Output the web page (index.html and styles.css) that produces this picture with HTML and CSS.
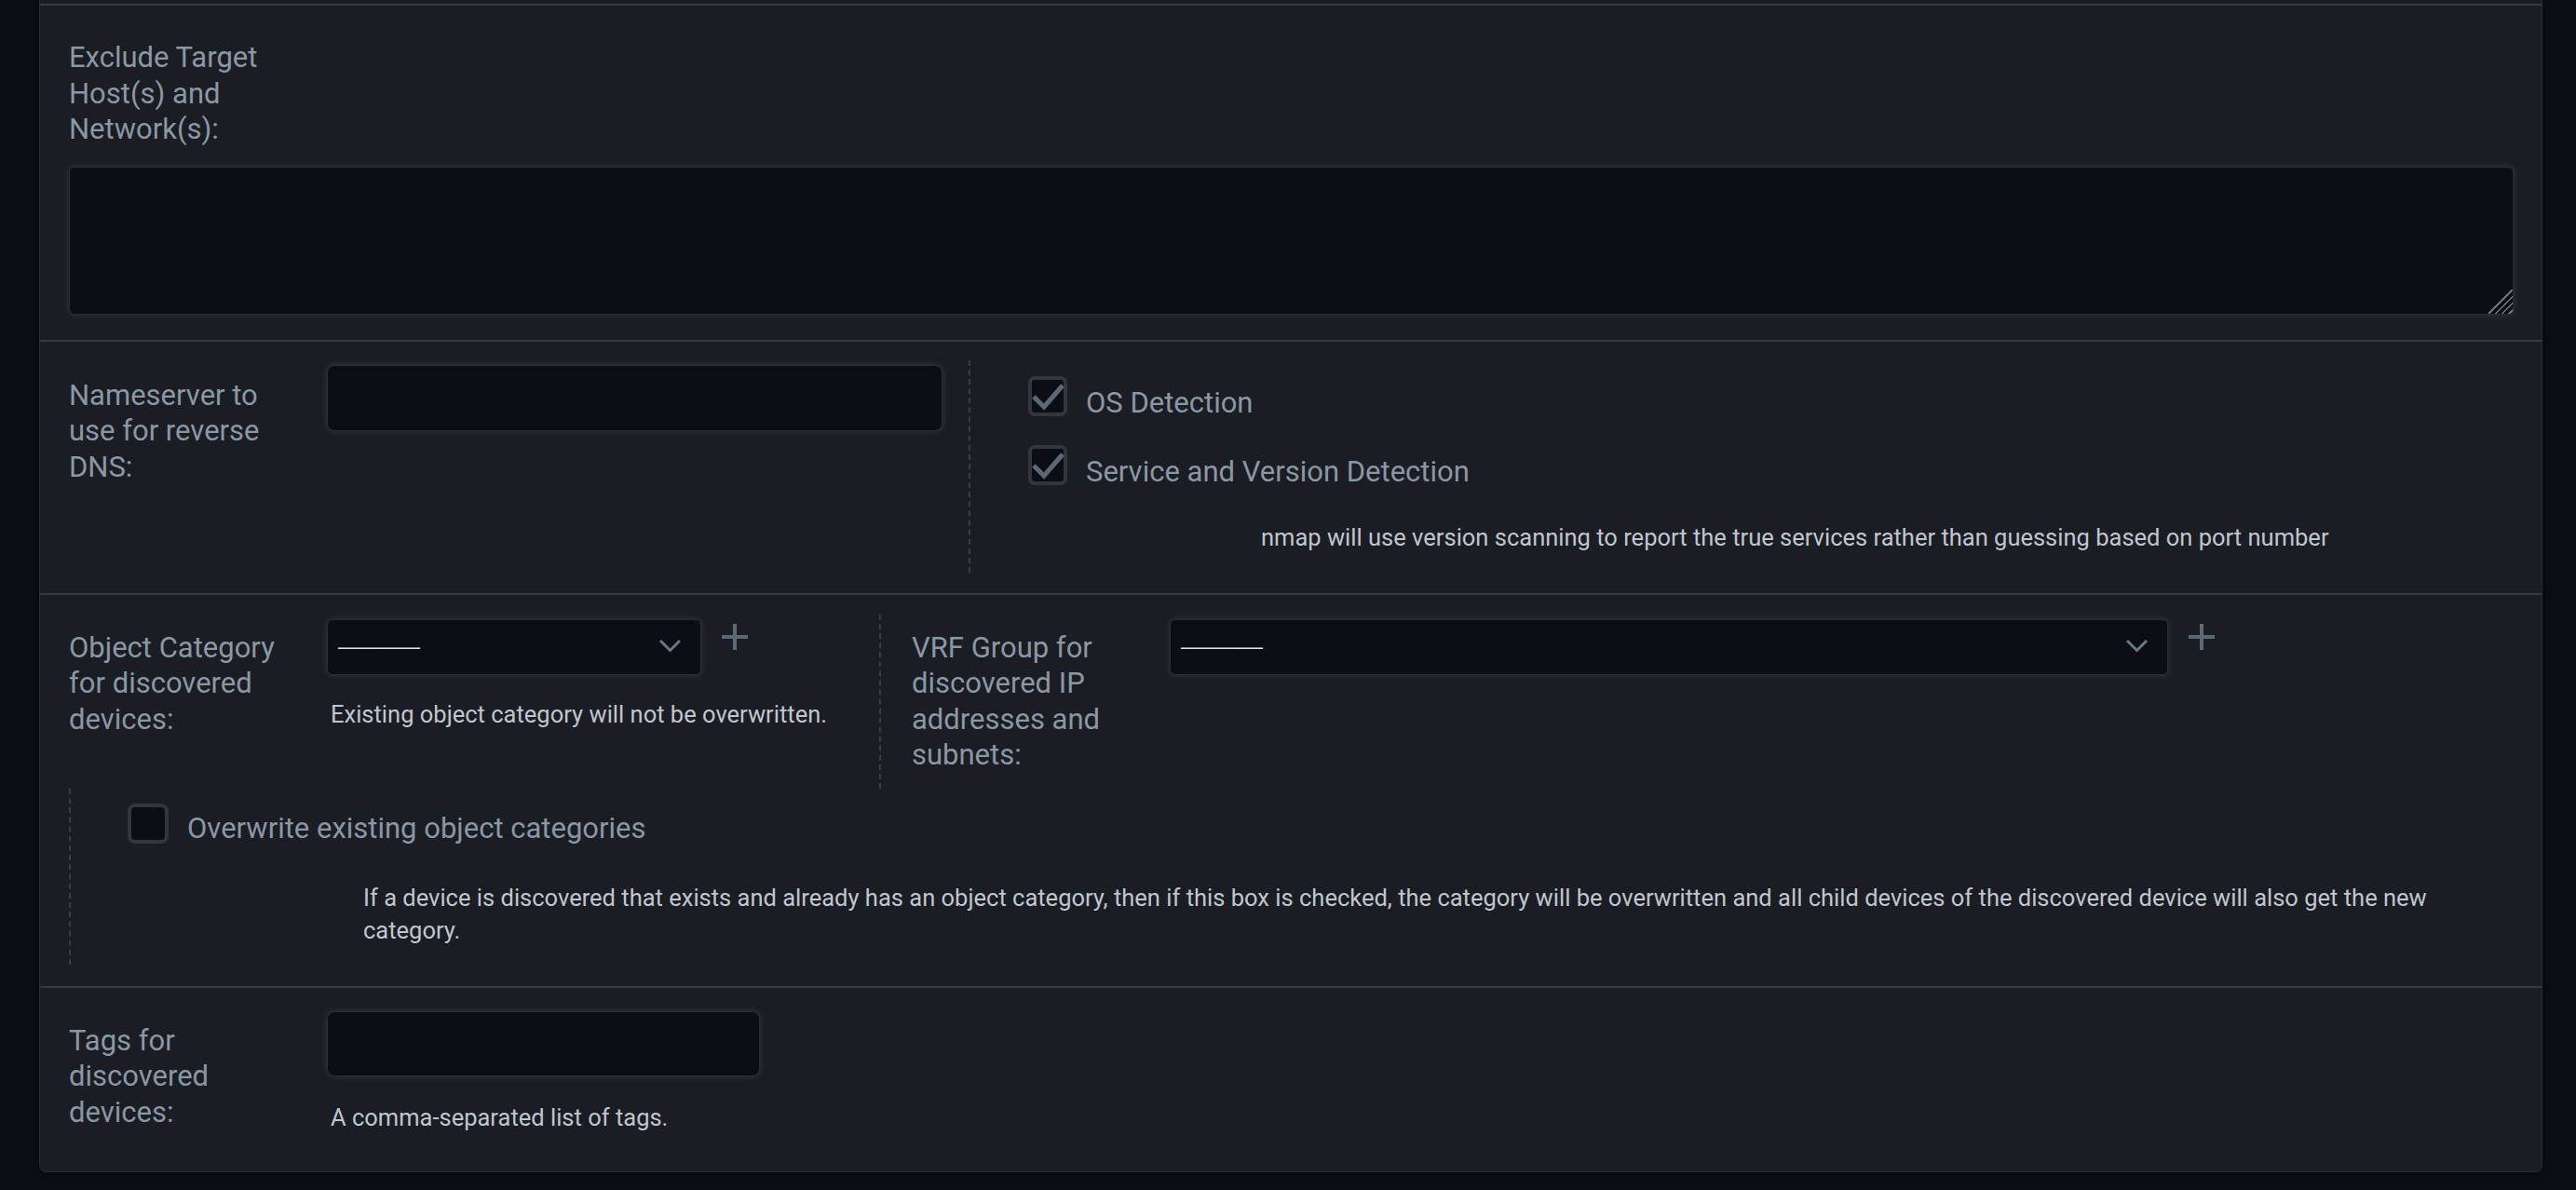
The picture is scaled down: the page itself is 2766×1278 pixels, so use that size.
FILE: index.html
```html
<!DOCTYPE html>
<html lang="en">
<head>
<meta charset="utf-8">
<title>Discovery settings</title>
<link rel="stylesheet" href="styles.css">
</head>
<body>
<div class="panel">
  <div class="row row-exclude">
    <label class="lbl">Exclude Target Host(s) and Network(s):</label>
    <div class="ta-wrap">
      <textarea class="ta"></textarea>
      <span class="grip"></span>
    </div>
  </div>

  <div class="row row-ns">
    <div class="ns-left">
      <label class="lbl lbl-ns">Nameserver to use for reverse DNS:</label>
      <div class="inp inp-ns"></div>
    </div>
    <div class="opts opts-ns">
      <div class="check">
        <svg class="cb" width="42" height="43" viewBox="0 0 42 43"><rect x="2" y="2" width="38" height="39" rx="5" fill="#0b0e14" stroke="#33363c" stroke-width="4"/><path d="M6 22 L17 33 L37 10" fill="none" stroke="#5c6875" stroke-width="5" stroke-linejoin="miter"/></svg>
        <span class="cl">OS Detection</span>
      </div>
      <div class="check">
        <svg class="cb" width="42" height="43" viewBox="0 0 42 43"><rect x="2" y="2" width="38" height="39" rx="5" fill="#0b0e14" stroke="#33363c" stroke-width="4"/><path d="M6 22 L17 33 L37 10" fill="none" stroke="#5c6875" stroke-width="5" stroke-linejoin="miter"/></svg>
        <span class="cl">Service and Version Detection</span>
      </div>
      <p class="help help-ns">nmap will use version scanning to report the true services rather than guessing based on port number</p>
    </div>
  </div>

  <div class="row row-cat">
    <div class="cat-top">
      <div class="cat-left">
        <label class="lbl lbl-sel">Object Category for discovered devices:</label>
        <div class="fieldcol">
          <div class="selrow">
            <div class="sel sel-cat">
              <span class="sel-val">————</span>
              <svg class="chev" width="25" height="15" viewBox="0 0 25 15"><path d="M2 2 L12.5 12.5 L23 2" fill="none" stroke="#6b7785" stroke-width="3"/></svg>
            </div>
            <svg class="plus" width="28" height="28" viewBox="0 0 28 28"><path d="M14 0 V28 M0 14 H28" stroke="#5d6976" stroke-width="4"/></svg>
          </div>
          <p class="help help-sel">Existing object category will not be overwritten.</p>
        </div>
      </div>
      <div class="vrf">
        <label class="lbl lbl-sel">VRF Group for discovered IP addresses and subnets:</label>
        <div class="selrow">
          <div class="sel sel-vrf">
            <span class="sel-val">————</span>
            <svg class="chev" width="25" height="15" viewBox="0 0 25 15"><path d="M2 2 L12.5 12.5 L23 2" fill="none" stroke="#6b7785" stroke-width="3"/></svg>
          </div>
          <svg class="plus" width="28" height="28" viewBox="0 0 28 28"><path d="M14 0 V28 M0 14 H28" stroke="#5d6976" stroke-width="4"/></svg>
        </div>
      </div>
    </div>
    <div class="opts opts-ow">
      <div class="check check-ow">
        <svg class="cb" width="44" height="43" viewBox="0 0 44 43"><rect x="2" y="2" width="40" height="39" rx="6" fill="#0b0e14" stroke="#33363c" stroke-width="4"/></svg>
        <span class="cl">Overwrite existing object categories</span>
      </div>
      <p class="help help-ow">If a device is discovered that exists and already has an object category, then if this box is checked, the category will be overwritten and all child devices of the discovered device will also get the new category.</p>
    </div>
  </div>

  <div class="row row-tags">
    <label class="lbl lbl-tags">Tags for discovered devices:</label>
    <div class="fieldcol">
      <div class="inp inp-tags"></div>
      <p class="help help-tags">A comma-separated list of tags.</p>
    </div>
  </div>
</div>
</body>
</html>
```

FILE: styles.css
```css
* {
  box-sizing: border-box;
  margin: 0;
  padding: 0;
}

html, body {
  background: #0b0e13;
}

body {
  font-family: Roboto, "Noto Sans", sans-serif;
  width: 2766px;
  height: 1278px;
  overflow: hidden;
}

.panel {
  margin-left: 42px;
  width: 2688px;
  padding-top: 4px;
  background: #1a1d23;
  border-left: 1px solid #2a2d33;
  border-right: 1px solid #2a2d33;
  border-bottom: 1px solid #2a2d33;
  border-radius: 0 0 8px 8px;
  box-shadow: 0 0 8px rgba(0, 0, 0, 0.6);
}

.row {
  border-top: 2px solid #383b41;
  padding: 0 30px 0 31px;
}

.lbl {
  display: block;
  flex: 0 0 245px;
  width: 245px;
  font-size: 31px;
  line-height: 38.5px;
  color: #8b97a3;
}

.help {
  font-size: 25.5px;
  line-height: 35px;
  color: #c0c6cd;
}

/* row 1 */
.row-exclude {
  padding-top: 37px;
  padding-bottom: 27px;
}

.ta-wrap {
  position: relative;
  margin-top: 20px;
}

.ta {
  display: block;
  width: 100%;
  height: 159px;
  background: #0b0e14;
  border: 1px solid #2a2e34;
  border-radius: 6px;
  box-shadow: 0 0 6px 1px rgba(95, 100, 110, 0.3);
  resize: none;
  outline: none;
}

.grip {
  position: absolute;
  right: 1px;
  bottom: 1px;
  width: 26px;
  height: 26px;
  background: linear-gradient(135deg,
    transparent 17.6px, #6d7278 17.6px 19.2px,
    transparent 19.2px 22.7px, #6d7278 22.7px 24.3px,
    transparent 24.3px 27.7px, #6d7278 27.7px 29.3px,
    transparent 29.3px 33.2px, #6d7278 33.2px 34.8px,
    transparent 34.8px);
  pointer-events: none;
}

.inp {
  background: #0b0e14;
  border: 1px solid #2a2e34;
  border-radius: 8px;
  box-shadow: 0 0 6px 1px rgba(95, 100, 110, 0.3);
}

/* row 2 */
.row-ns {
  display: flex;
  padding-top: 20px;
  padding-bottom: 22px;
}

.ns-left {
  display: flex;
  flex: 0 0 966px;
  gap: 32px;
}

.lbl-ns {
  margin-top: 19px;
}

.inp-ns {
  width: 661px;
  height: 71px;
  margin-top: 5px;
}

.opts {
  border-left: 2px dashed #3a3e44;
}

.opts-ns {
  flex: 1;
  padding: 17px 0 19.5px 62px;
}

.check {
  display: flex;
  align-items: flex-start;
  gap: 20px;
  height: 47px;
}

.check + .check {
  margin-top: 27px;
}

.cb {
  flex: none;
  display: block;
}

.cl {
  padding-top: 10px;
  font-size: 31px;
  line-height: 38.5px;
  color: #8b97a3;
}

.help-ns {
  margin-top: 35.5px;
  margin-left: 250px;
}

/* row 3 */
.row-cat {
  padding-top: 21px;
  padding-bottom: 23px;
}

.cat-top {
  display: flex;
}

.cat-left {
  display: flex;
  flex: 0 0 870px;
  gap: 32px;
}

.lbl-sel {
  margin-top: 17px;
}

.selrow {
  display: flex;
  align-items: flex-start;
  gap: 22px;
}

.sel {
  display: flex;
  align-items: center;
  justify-content: space-between;
  height: 60px;
  margin-top: 5px;
  padding: 0 20px 0 11px;
  background: #0b0e14;
  border: 1px solid #2a2e34;
  border-radius: 6px;
  box-shadow: 0 0 6px 1px rgba(95, 100, 110, 0.3);
}

.sel-cat {
  width: 402px;
}

.sel-vrf {
  width: 1072px;
}

.sel-val {
  font-family: "Liberation Sans", Arial, sans-serif;
  font-size: 22px;
  line-height: 1;
  color: #e2e4e6;
}

.chev {
  display: block;
  margin-top: -2px;
}

.plus {
  display: block;
  flex: none;
  margin-top: 10px;
}

.help-sel {
  margin-top: 25.5px;
  margin-left: 4px;
}

.vrf {
  display: flex;
  flex: 1;
  gap: 32px;
  border-left: 2px dashed #3a3e44;
  padding-left: 33px;
  padding-bottom: 16.5px;
}

.opts-ow {
  padding: 16px 0 19.5px 61px;
}

.check-ow .cl {
  padding-top: 8px;
}

.help-ow {
  max-width: 2280px;
  margin-top: 36.5px;
  margin-left: 253px;
}

/* row 4 */
.row-tags {
  display: flex;
  gap: 32px;
  padding-top: 25px;
  padding-bottom: 40px;
}

.lbl-tags {
  margin-top: 12.5px;
}

.inp-tags {
  width: 465px;
  height: 70px;
}

.help-tags {
  margin-top: 26.5px;
  margin-left: 4px;
}
```
